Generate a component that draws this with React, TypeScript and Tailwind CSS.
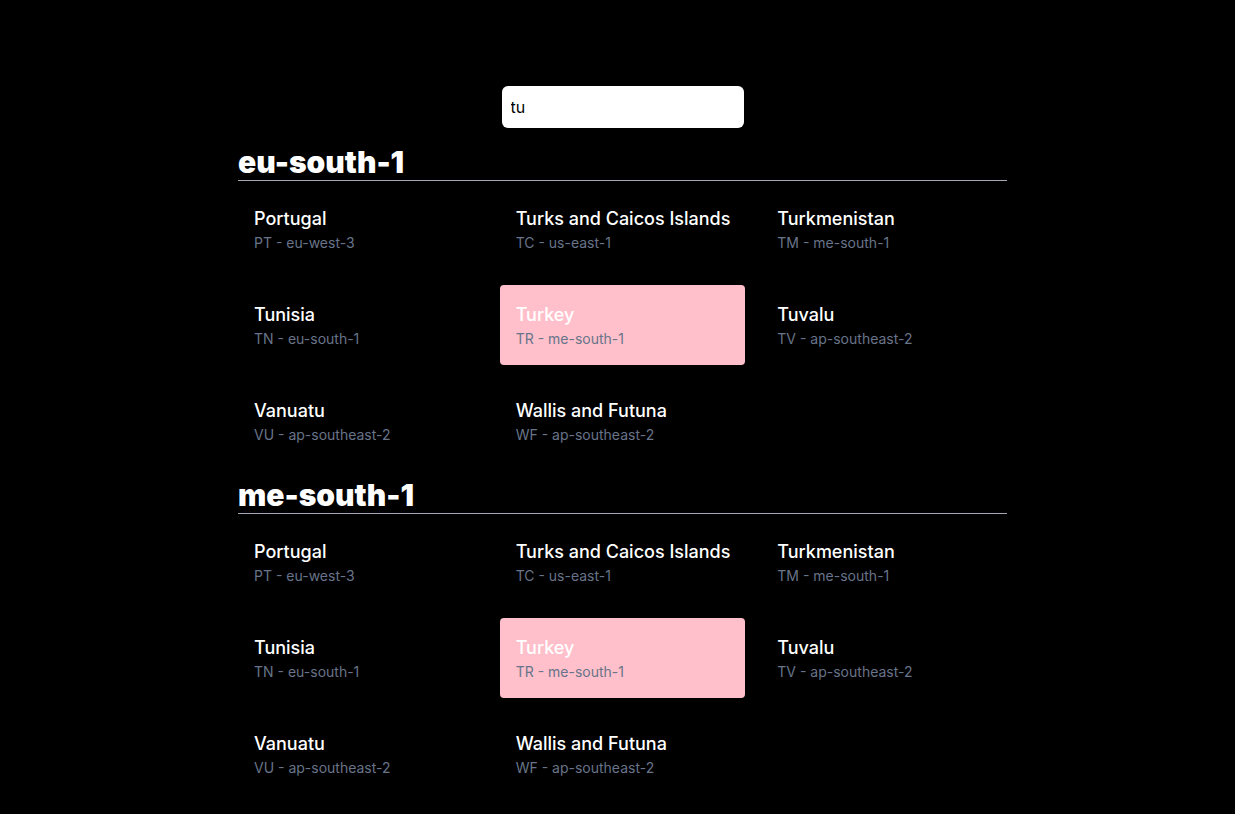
import { useState } from "react";

type Country = {
  name: string;
  code: string;
  region: string;
};

const countries: Country[] = [
  { name: "Portugal", code: "PT", region: "eu-west-3" },
  { name: "Turks and Caicos Islands", code: "TC", region: "us-east-1" },
  { name: "Turkmenistan", code: "TM", region: "me-south-1" },
  { name: "Tunisia", code: "TN", region: "eu-south-1" },
  { name: "Turkey", code: "TR", region: "me-south-1" },
  { name: "Tuvalu", code: "TV", region: "ap-southeast-2" },
  { name: "Vanuatu", code: "VU", region: "ap-southeast-2" },
  { name: "Wallis and Futuna", code: "WF", region: "ap-southeast-2" }
];

const regions = ["eu-south-1", "me-south-1"];

function CountryCard({ country, active }: { country: Country; active: boolean }) {
  return (
    <div
      className={
        active
          ? "h-20 rounded bg-[#ffc0cb] p-4 whitespace-nowrap"
          : "h-20 rounded p-4 whitespace-nowrap"
      }
    >
      <div className="text-lg leading-7 font-medium text-white">{country.name}</div>
      <div className="text-sm leading-5 text-[#687489]">
        {country.code} - {country.region}
      </div>
    </div>
  );
}

export default function App() {
  const [query, setQuery] = useState("tu");

  return (
    <div
      className="flex min-h-screen justify-center bg-black pt-[86px] pb-16 pl-[10px]"
      style={{ fontFamily: "Inter, 'Noto Sans', sans-serif" }}
    >
      <div className="flex w-[769px] flex-col">
        <input
          value={query}
          onChange={(e) => setQuery(e.target.value)}
          className="mx-auto h-[42px] w-[242px] rounded-md bg-white px-[9px] text-base text-black outline-none"
        />

        {regions.map((region) => (
          <section key={region} className="mt-4">
            <h2 className="border-b border-[#a6a6b6] text-3xl leading-9 font-black text-white">
              {region}
            </h2>
            <div className="mt-2 grid grid-cols-3 gap-4">
              {countries.map((country) => (
                <CountryCard
                  key={country.code}
                  country={country}
                  active={country.code === "TR"}
                />
              ))}
            </div>
          </section>
        ))}
      </div>
    </div>
  );
}
